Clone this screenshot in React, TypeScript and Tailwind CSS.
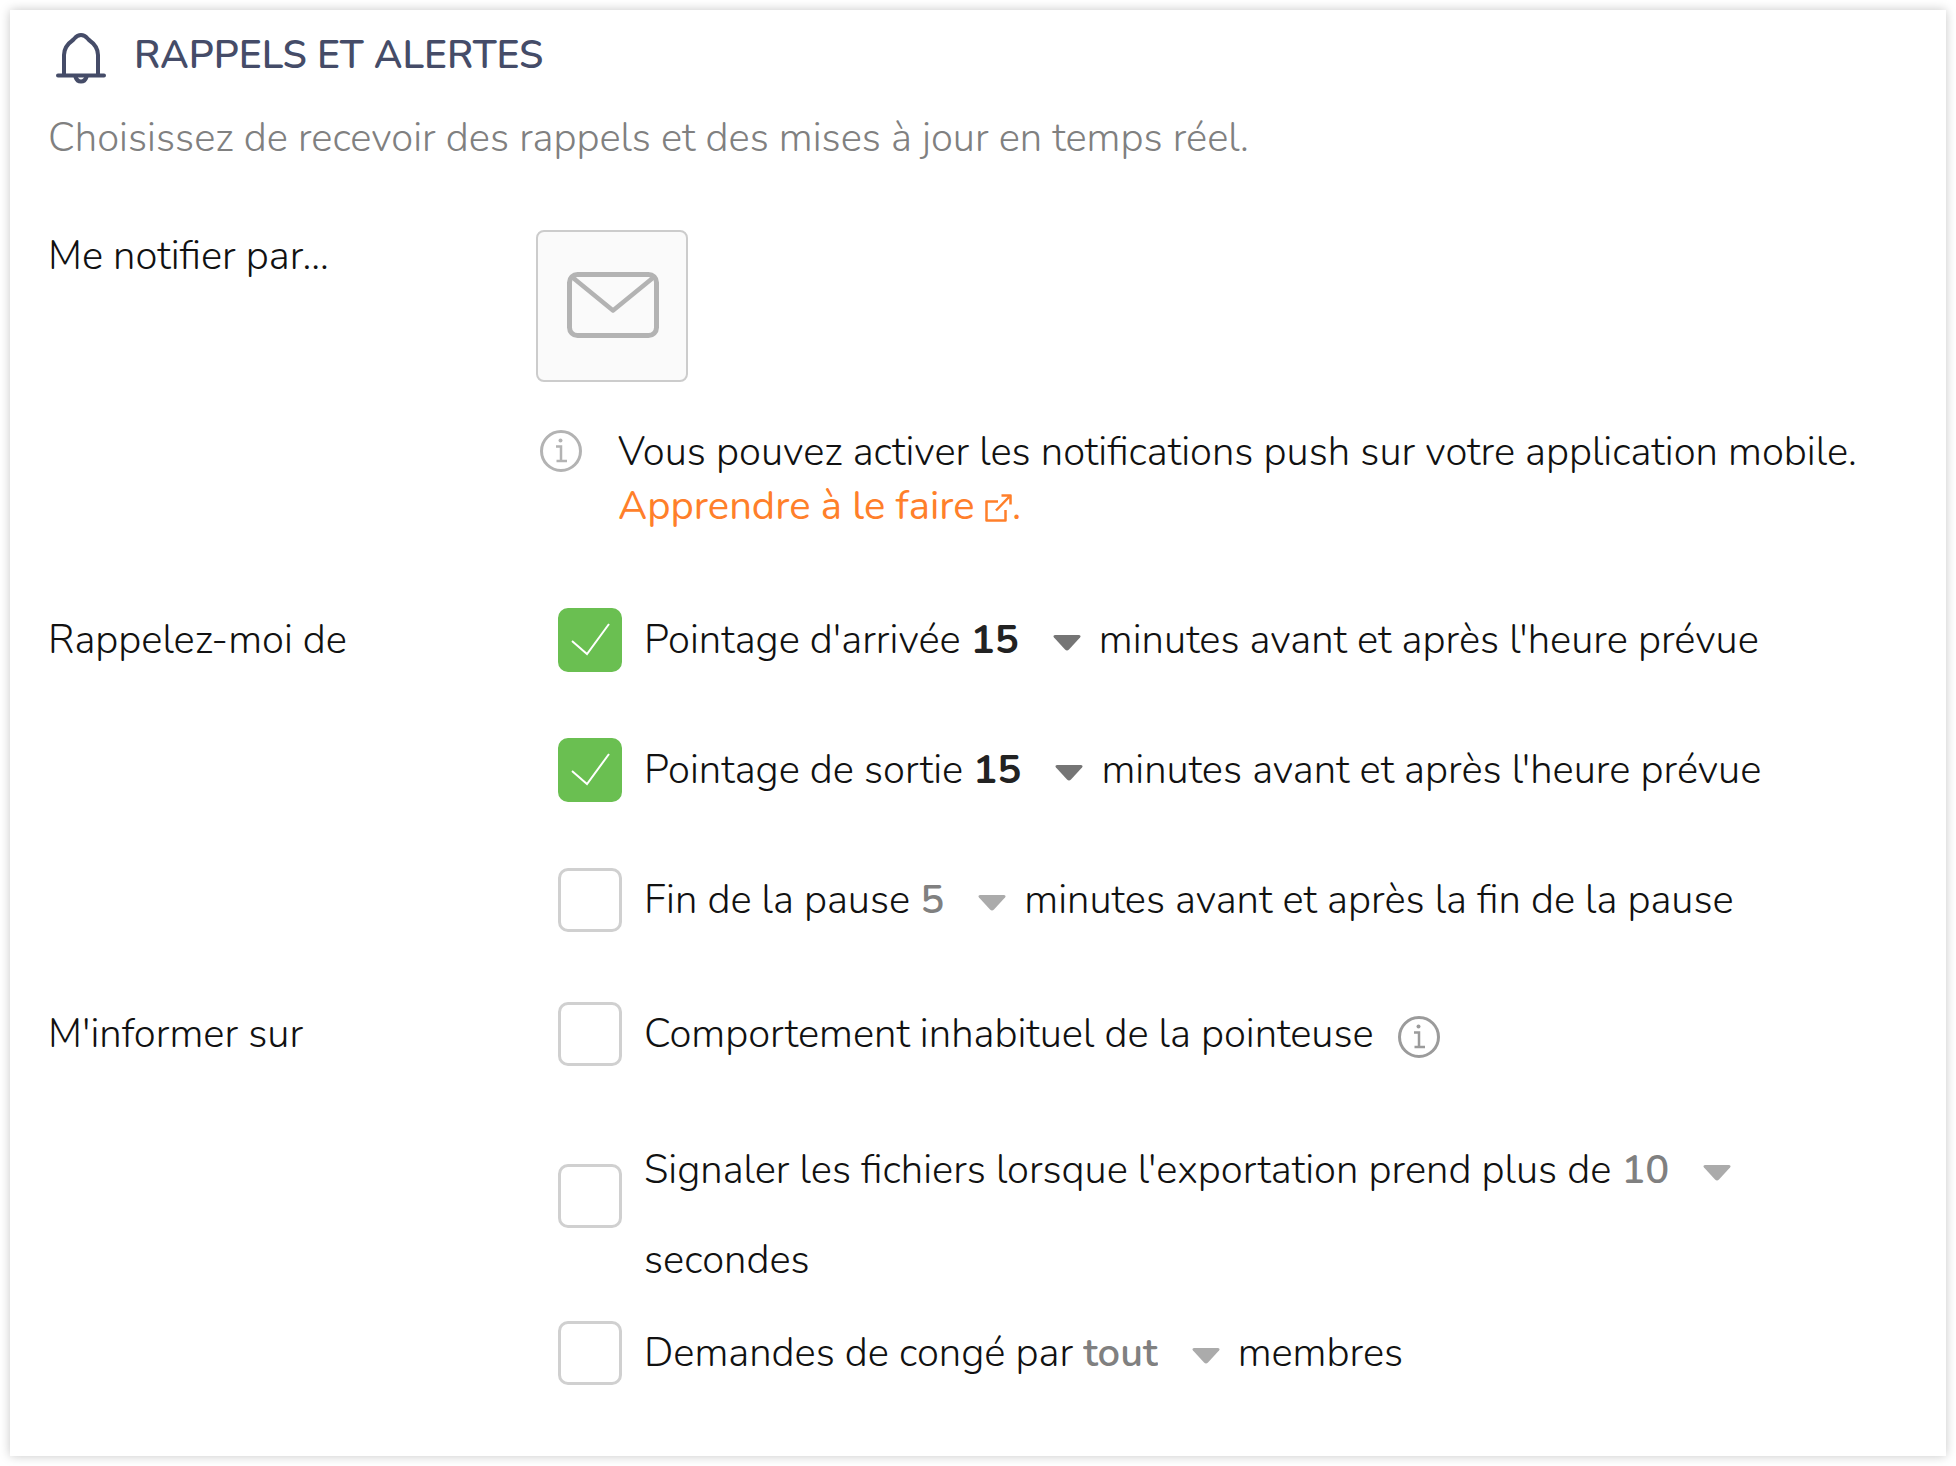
import { useId, useState, type ReactNode } from "react";

function BellIcon() {
  return (
    <svg viewBox="0 0 50 56" className="h-14 w-[50px] shrink-0 text-[#454c68]" fill="none" stroke="currentColor" strokeWidth="4" strokeLinecap="round" strokeLinejoin="round" aria-hidden="true">
      <path d="M8 46V27C8 20 12 15.500 17 12C19.500 9.500 20.500 7 25 7C29.500 7 30.500 9.500 33 12C38 15.500 42 20 42 27V46" />
      <path d="M2 47.500H48" />
      <path d="M19.500 49C20.500 52 22.500 53.500 25 53.500C27.500 53.500 29.500 52 30.500 49" />
    </svg>
  );
}

function MailIcon() {
  return (
    <svg viewBox="-2 0 94 68" className="h-[68px] w-[94px]" fill="none" stroke="#b3b3b3" strokeWidth="5" strokeLinejoin="round" aria-hidden="true">
      <rect x="2.500" y="2.500" width="87" height="61" rx="8" />
      <path d="M5 5L46 38.500L87 5" strokeWidth="4.500" />
    </svg>
  );
}

function InfoIcon() {
  return (
    <svg viewBox="0 0 42 42" className="size-[42px] shrink-0" fill="none" stroke="currentColor" strokeWidth="3" aria-hidden="true">
      <circle cx="21" cy="21" r="19.500" />
      <path d="M16 16.500H21V31M16.500 31H27" strokeWidth="2.500" />
      <circle cx="20.500" cy="10.500" r="2" fill="currentColor" stroke="none" />
    </svg>
  );
}

function ExternalIcon() {
  return (
    <svg viewBox="0 0 27 28" className="inline h-7 w-[27px] align-[-3px]" fill="none" stroke="currentColor" strokeWidth="2.500" strokeLinejoin="round" aria-hidden="true">
      <path d="M13 7.500H1.500V26.500H20.500V16" />
      <path d="M11 16.500L24 3M16.500 1.500H25.500V10.500" />
    </svg>
  );
}

function Picker({ label, options, active }: { label: string; options: string[]; active: boolean }) {
  return (
    <span className={active ? "relative inline-block text-[#757575]" : "relative inline-block text-[#ababab]"}>
      <select
        aria-label={label}
        className={
          active
            ? "cursor-pointer appearance-none bg-transparent pr-[70px] font-bold leading-[54px] text-[#222] outline-none [field-sizing:content]"
            : "cursor-pointer appearance-none bg-transparent pr-[70px] font-semibold leading-[54px] text-[#808080] outline-none [field-sizing:content]"
        }
      >
        {options.map((option) => (
          <option key={option}>{option}</option>
        ))}
      </select>
      <svg viewBox="0 0 28 16" className="pointer-events-none absolute right-2 bottom-[34px] h-4 w-7" fill="currentColor" aria-hidden="true">
        <path d="M2 0H26Q28.500 0.500 27 2.500L16 14.500Q14 16.500 12 14.500L1 2.500Q-0.500 0.500 2 0Z" />
      </svg>
    </span>
  );
}

type OptionProps = {
  label: string;
  initial?: boolean;
  options?: string[];
  suffix?: string;
  tall?: boolean;
  extra?: ReactNode;
};

function Option({ label, initial = false, options, suffix, tall = false, extra }: OptionProps) {
  const id = useId();
  const [on, setOn] = useState(initial);
  return (
    <div className="flex items-start gap-[22px]">
      <span className={tall ? "relative mt-[39px] size-16 shrink-0" : "relative mt-[13px] size-16 shrink-0"}>
        <input
          id={id}
          type="checkbox"
          checked={on}
          onChange={(e) => setOn(e.target.checked)}
          className="block size-16 cursor-pointer appearance-none rounded-[10px] border-3 border-[#d0d0d0] bg-white checked:border-[#6abf51] checked:bg-[#6abf51]"
        />
        {on && (
          <svg viewBox="0 0 64 64" className="pointer-events-none absolute inset-0 size-16" fill="none" stroke="white" strokeWidth="2" aria-hidden="true">
            <path d="M14 33L29 46L51 16" />
          </svg>
        )}
      </span>
      <div className="leading-[90px]">
        <label htmlFor={id}>{label}</label>
        {options && (
          <>
            {" "}
            <Picker label={label} options={options} active={on} />
          </>
        )}
        {suffix && <> {suffix}</>}
        {extra}
      </div>
    </div>
  );
}

const MINUTES = ["5", "10", "15", "30"];
const FROM_15 = ["15", "5", "10", "30"];

export default function App() {
  return (
    <main className="bg-white p-2.5 font-['Nunito','Open_Sans',sans-serif] text-[40px] font-light leading-[54px] text-[#111]">
      <section className="bg-white pt-[19px] pr-14 pb-[58px] pl-[38px] shadow-[0_0_10px_rgba(0,0,0,0.22)]">
        <header>
          <div className="flex h-[54px] items-center gap-7 pl-2">
            <BellIcon />
            <h1 className="text-[39px] font-semibold text-[#454c68]">RAPPELS ET ALERTES</h1>
          </div>
          <p className="mt-7 text-[#808080]">Choisissez de recevoir des rappels et des mises à jour en temps réel.</p>
        </header>

        <div className="mt-16 grid grid-cols-[488px_1fr]">
          <h2>Me notifier par...</h2>
          <div className="pt-px">
            <button type="button" aria-label="E-mail" className="flex size-[152px] items-center justify-center rounded-lg border-2 border-[#ccc] bg-[#fafafa]">
              <MailIcon />
            </button>
            <div className="mt-[43px] flex items-start gap-9 pl-1">
              <span className="mt-[5px] text-[#b3b3b3]">
                <InfoIcon />
              </span>
              <p>
                Vous pouvez activer les notifications push sur votre application mobile.
                <br />
                <a href="#aide" className="font-normal text-[#ff7f2a]">
                  Apprendre à le faire <ExternalIcon />.
                </a>
              </p>
            </div>
          </div>
        </div>

        <div className="mt-[62px] grid grid-cols-[488px_1fr]">
          <h2 className="leading-[90px]">Rappelez-moi de</h2>
          <div className="flex flex-col gap-10 pl-[22px]">
            <Option label="Pointage d'arrivée" initial options={FROM_15} suffix="minutes avant et après l'heure prévue" />
            <Option label="Pointage de sortie" initial options={FROM_15} suffix="minutes avant et après l'heure prévue" />
            <Option label="Fin de la pause" options={MINUTES} suffix="minutes avant et après la fin de la pause" />
          </div>
        </div>

        <div className="mt-11 grid grid-cols-[488px_1fr]">
          <h2 className="leading-[90px]">M'informer sur</h2>
          <div className="flex flex-col gap-[3px] pl-[22px]">
            <div className="flex flex-col gap-[46px]">
              <Option
                label="Comportement inhabituel de la pointeuse"
                extra={
                  <button type="button" aria-label="Plus d'informations" className="ml-6 inline-block align-middle text-[#9b9b9b]">
                    <InfoIcon />
                  </button>
                }
              />
              <Option label="Signaler les fichiers lorsque l'exportation prend plus de" options={["10", "20", "30"]} suffix="secondes" tall />
            </div>
            <Option label="Demandes de congé par" options={["tout", "mes"]} suffix="membres" />
          </div>
        </div>
      </section>
    </main>
  );
}
